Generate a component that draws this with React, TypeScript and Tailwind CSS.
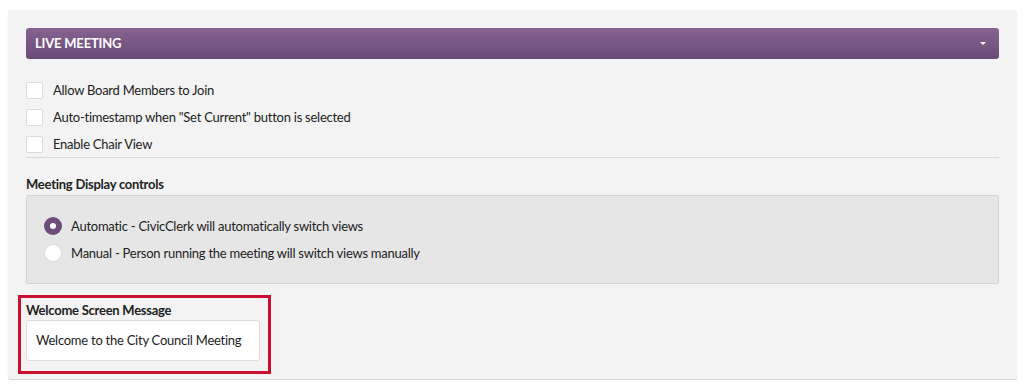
import React from 'react';

const options = [
    'Allow Board Members to Join',
    'Auto-timestamp when "Set Current" button is selected',
    'Enable Chair View',
];

export default function App() {
    return (
        <div className="w-[1025px] h-[389px] bg-white pt-[10px] pl-[8px] font-['Lato',sans-serif] text-[13px] tracking-[-0.25px] text-[#222]">
            <div className="w-[1009px] h-[369px] bg-[#f3f3f3] rounded-[3px] shadow-[0_1px_1px_rgba(0,0,0,0.18)] px-[18px] pt-[18px]">
                {/* Header */}
                <div className="h-[31px] rounded-[3px] bg-gradient-to-b from-[#86628f] to-[#6a4c78] flex items-center justify-between pl-[9px] pr-[13px]">
                    <span className="text-white font-bold text-[13px] uppercase tracking-[-0.2px]">Live Meeting</span>
                    <span className="w-0 h-0 border-l-[3px] border-r-[3px] border-t-[3px] border-l-transparent border-r-transparent border-t-white"></span>
                </div>

                {/* Checkboxes */}
                <div className="mt-[23px] flex flex-col gap-[10px]">
                    {options.map((label, i) => (
                        <label key={i} className="flex items-center h-[17px]">
                            <span className="w-[17px] h-[17px] bg-white border border-[#dcdcdc] rounded-[2px] shrink-0"></span>
                            <span className="ml-[10px] leading-none">{label}</span>
                        </label>
                    ))}
                </div>
                <div className="mt-[4px] border-t border-[#dadada]"></div>

                {/* Meeting Display controls */}
                <div className="mt-[20px] font-bold leading-none">Meeting Display controls</div>
                <div className="mt-[4px] h-[89px] bg-[#e6e6e6] border border-[#d4d4d4] rounded-[2px] pt-[21px] pl-[17px] flex flex-col gap-[9px]">
                    <label className="flex items-center h-[18px]">
                        <span className="w-[18px] h-[18px] rounded-full bg-[#6b4c7a] flex items-center justify-center shrink-0">
                            <span className="w-[6px] h-[6px] rounded-full bg-white"></span>
                        </span>
                        <span className="ml-[9px] leading-none">Automatic - CivicClerk will automatically switch views</span>
                    </label>
                    <label className="flex items-center h-[18px]">
                        <span className="w-[18px] h-[18px] rounded-full bg-white border border-[#dcdcdc] shrink-0"></span>
                        <span className="ml-[9px] leading-none">Manual - Person running the meeting will switch views manually</span>
                    </label>
                </div>

                {/* Welcome Screen Message */}
                <div className="mt-[11px] -ml-[8px] w-[253px] h-[79px] border-[3px] border-[#c8102e] pl-[5px] pt-[6px]">
                    <div className="font-bold leading-none">Welcome Screen Message</div>
                    <div className="mt-[3px] w-[234px] h-[41px] bg-white border border-[#dcdcdc] rounded-[3px] flex items-center pl-[9px]">
                        Welcome to the City Council Meeting
                    </div>
                </div>
            </div>
        </div>
    );
}
